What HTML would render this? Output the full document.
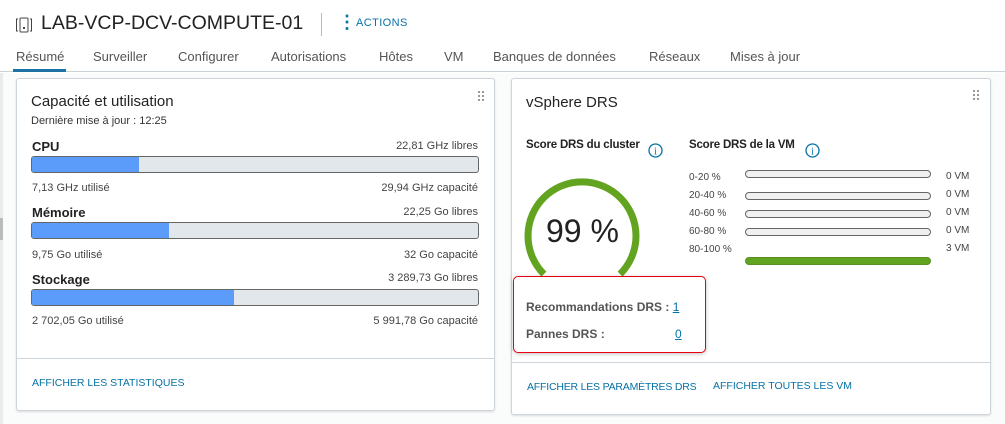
<!DOCTYPE html>
<html><head><meta charset="utf-8"><style>
*{margin:0;padding:0;box-sizing:border-box}
body{width:1005px;height:424px;position:relative;background:#fafbfb;font-family:"Liberation Sans",sans-serif;color:#333;overflow:hidden}
.a{position:absolute;white-space:nowrap}
.card{position:absolute;background:#fff;border:1px solid #cdd5db;border-radius:3px;box-shadow:0 1px 2px rgba(0,0,0,.12)}
.bar{position:absolute;left:31px;width:448px;height:17px;border:1px solid #666;border-radius:3px;background:#e1e7ea;overflow:hidden}
.bar i{display:block;height:100%;background:#5b9cfb}
.s{font-size:11px;color:#444}
.b{font-size:13px;font-weight:bold;color:#222}
.link{font-size:10.5px;color:#0572a6;letter-spacing:0}
.vb{position:absolute;left:745px;width:186px;height:8px;border:1px solid #666;border-radius:4px;background:#f0f0f0}
.dots{position:absolute;width:8px;height:11px;background-image:radial-gradient(circle,#999 1.1px,transparent 1.3px);background-size:4px 4px}
</style></head><body>
<div class="a" style="left:0;top:0;width:3px;height:424px;background:#eaeaea"></div>
<div class="a" style="left:0;top:218px;width:3px;height:22px;background:#bbb"></div>
<div style="position:absolute;left:0;top:0;width:1005px;height:73px;background:#fff"></div>
<svg class="a" style="left:15px;top:17px" width="18" height="16" viewBox="0 0 18 16"><path d="M3 2H1.5V14H3M15 2h1.5V14H15" fill="none" stroke="#444" stroke-width="1"/><rect x="5" y="1" width="8" height="14" rx="1" fill="none" stroke="#444"/><rect x="8" y="10" width="2" height="2" fill="#444"/></svg>
<div class="a" style="left:41px;top:12px;font-size:19.5px;color:#222">LAB-VCP-DCV-COMPUTE-01</div>
<div class="a" style="left:321px;top:13px;width:1px;height:23px;background:#bbb"></div>
<div class="a" style="left:338px;top:12px;font-size:18px;color:#0572a6;font-weight:bold;line-height:20px">⋮</div>
<div class="a" style="left:356px;top:17px;font-size:11px;color:#0572a6;letter-spacing:.4px">ACTIONS</div>
<div class="a" style="left:0;top:71px;width:1005px;height:1px;background:#ccd3d8"></div>
<div class="a" style="left:13px;top:69px;width:53px;height:3px;background:#1c73a3"></div>
<div class="a" style="top:49px;left:16px;font-size:13px;color:#555">Résumé</div>
<div class="a" style="top:49px;left:93px;font-size:13px;color:#555">Surveiller</div>
<div class="a" style="top:49px;left:178px;font-size:13px;color:#555">Configurer</div>
<div class="a" style="top:49px;left:271px;font-size:13px;color:#555">Autorisations</div>
<div class="a" style="top:49px;left:379px;font-size:13px;color:#555">Hôtes</div>
<div class="a" style="top:49px;left:444px;font-size:13px;color:#555">VM</div>
<div class="a" style="top:49px;left:493px;font-size:13px;color:#555">Banques de données</div>
<div class="a" style="top:49px;left:649px;font-size:13px;color:#555">Réseaux</div>
<div class="a" style="top:49px;left:730px;font-size:13px;color:#555">Mises à jour</div>

<div class="card" style="left:16px;top:78px;width:479px;height:333px"></div>
<div class="dots" style="left:477px;top:90px"></div>
<div class="a" style="left:31px;top:93px;font-size:15px;color:#222">Capacité et utilisation</div>
<div class="a s" style="left:31px;top:115px;color:#333">Dernière mise à jour : 12:25</div>
<div class="a b" style="left:32px;top:139px">CPU</div>
<div class="a s" style="right:527px;top:140px">22,81 GHz libres</div>
<div class="bar" style="top:156px"><i style="width:107px"></i></div>
<div class="a s" style="left:32px;top:182px">7,13 GHz utilisé</div>
<div class="a s" style="right:527px;top:182px">29,94 GHz capacité</div>
<div class="a b" style="left:32px;top:205px">Mémoire</div>
<div class="a s" style="right:527px;top:206px">22,25 Go libres</div>
<div class="bar" style="top:222px"><i style="width:137px"></i></div>
<div class="a s" style="left:32px;top:249px">9,75 Go utilisé</div>
<div class="a s" style="right:527px;top:249px">32 Go capacité</div>
<div class="a b" style="left:32px;top:272px">Stockage</div>
<div class="a s" style="right:527px;top:272px">3 289,73 Go libres</div>
<div class="bar" style="top:289px"><i style="width:202px"></i></div>
<div class="a s" style="left:32px;top:315px">2 702,05 Go utilisé</div>
<div class="a s" style="right:527px;top:315px">5 991,78 Go capacité</div>
<div class="a" style="left:17px;top:358px;width:477px;height:1px;background:#cdd5db"></div>
<div class="a link" style="left:32px;top:377px">AFFICHER LES STATISTIQUES</div>

<div class="card" style="left:511px;top:78px;width:480px;height:337px"></div>
<div class="dots" style="left:972px;top:89px"></div>
<div class="a" style="left:526px;top:94px;font-size:15px;color:#222">vSphere DRS</div>
<div class="a" style="left:526px;top:139px;font-size:11.5px;font-weight:bold;color:#222;letter-spacing:-.2px">Score DRS du cluster</div>
<svg class="a" style="left:648px;top:143px" width="15" height="15"><circle cx="7.5" cy="7.5" r="6.5" fill="none" stroke="#0572a6" stroke-width="1.3"/><text x="7.5" y="11.5" font-size="10" text-anchor="middle" fill="#0572a6" font-family="Liberation Serif">i</text></svg>
<div class="a" style="left:689px;top:139px;font-size:11.5px;font-weight:bold;color:#222;letter-spacing:-.2px">Score DRS de la VM</div>
<svg class="a" style="left:805px;top:143px" width="15" height="15"><circle cx="7.5" cy="7.5" r="6.5" fill="none" stroke="#0572a6" stroke-width="1.3"/><text x="7.5" y="11.5" font-size="10" text-anchor="middle" fill="#0572a6" font-family="Liberation Serif">i</text></svg>
<svg class="a" style="left:520px;top:172px" width="125" height="110"><path d="M23.9 102.1 A54 54 0 1 1 100.1 102.1" fill="none" stroke="#62a420" stroke-width="7"/></svg>
<div class="a" style="left:546px;top:213px;font-size:32px;color:#222">99 %</div>
<div class="a" style="left:689px;top:172px;font-size:10px;color:#444">0-20 %</div>
<div class="a" style="left:689px;top:190px;font-size:10px;color:#444">20-40 %</div>
<div class="a" style="left:689px;top:208px;font-size:10px;color:#444">40-60 %</div>
<div class="a" style="left:689px;top:226px;font-size:10px;color:#444">60-80 %</div>
<div class="a" style="left:689px;top:244px;font-size:10px;color:#444">80-100 %</div>
<div class="vb" style="top:170px"></div>
<div class="vb" style="top:192px"></div>
<div class="vb" style="top:210px"></div>
<div class="vb" style="top:228px"></div>
<div class="vb" style="top:257px;background:#62a420;border-color:#5a8f25"></div>
<div class="a" style="left:946px;top:171px;font-size:10px;color:#444">0 VM</div>
<div class="a" style="left:946px;top:189px;font-size:10px;color:#444">0 VM</div>
<div class="a" style="left:946px;top:207px;font-size:10px;color:#444">0 VM</div>
<div class="a" style="left:946px;top:225px;font-size:10px;color:#444">0 VM</div>
<div class="a" style="left:946px;top:243px;font-size:10px;color:#444">3 VM</div>
<div class="a" style="left:513px;top:276px;width:193px;height:77px;border:1.5px solid #e8000f;border-radius:5px;box-shadow:0 1px 4px rgba(0,0,0,.25)"></div>
<div class="a" style="left:526px;top:300px;font-size:12px;font-weight:bold;color:#555">Recommandations DRS : <span style="color:#0572a6;font-weight:normal;text-decoration:underline">1</span></div>
<div class="a" style="left:526px;top:327px;font-size:12px;font-weight:bold;color:#555">Pannes DRS :</div>
<div class="a" style="left:675px;top:327px;font-size:12px;color:#0572a6;text-decoration:underline">0</div>
<div class="a" style="left:512px;top:362px;width:478px;height:1px;background:#cdd5db"></div>
<div class="a link" style="left:527px;top:381px;letter-spacing:-.2px">AFFICHER LES PARAMÈTRES DRS</div>
<div class="a link" style="left:713px;top:380px">AFFICHER TOUTES LES VM</div>
</body></html>
